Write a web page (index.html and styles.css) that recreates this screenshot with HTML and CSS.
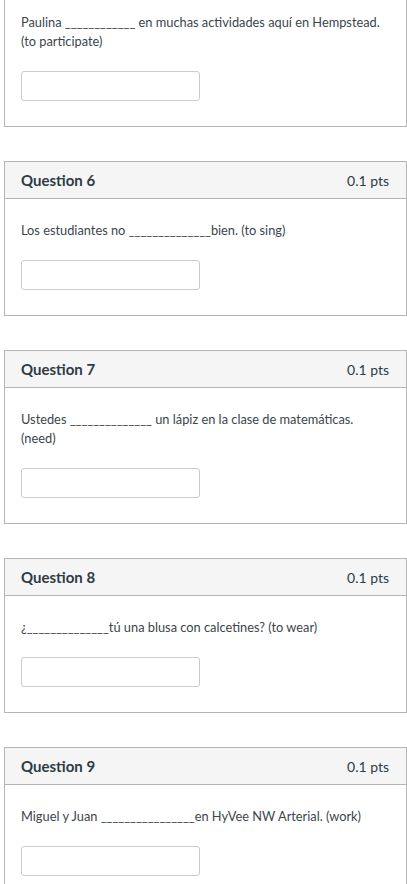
FILE: index.html
```html
<!DOCTYPE html>
<html lang="es">
<head>
<meta charset="utf-8">
<link rel="stylesheet" href="styles.css">
</head>
<body>
<div class="page">
  <div class="card card-partial">
    <div class="card-body">
      <div class="q-text">Paulina ____________ en muchas actividades aquí en Hempstead. (to participate)</div>
      <input class="answer" type="text">
    </div>
  </div>

  <div class="card">
    <div class="card-header"><span class="q-title">Question 6</span><span class="q-pts">0.1 pts</span></div>
    <div class="card-body">
      <div class="q-text">Los estudiantes no ______________bien. (to sing)</div>
      <input class="answer" type="text">
    </div>
  </div>

  <div class="card">
    <div class="card-header"><span class="q-title">Question 7</span><span class="q-pts">0.1 pts</span></div>
    <div class="card-body">
      <div class="q-text">Ustedes ______________ un lápiz en la clase de matemáticas. (need)</div>
      <input class="answer" type="text">
    </div>
  </div>

  <div class="card">
    <div class="card-header"><span class="q-title">Question 8</span><span class="q-pts">0.1 pts</span></div>
    <div class="card-body">
      <div class="q-text">¿______________tú una blusa con calcetines? (to wear)</div>
      <input class="answer" type="text">
    </div>
  </div>

  <div class="card">
    <div class="card-header"><span class="q-title">Question 9</span><span class="q-pts">0.1 pts</span></div>
    <div class="card-body">
      <div class="q-text">Miguel y Juan ________________en HyVee NW Arterial. (work)</div>
      <input class="answer" type="text">
    </div>
  </div>
</div>
</body>
</html>
```

FILE: styles.css
```css
html, body {
  margin: 0;
  padding: 0;
  background: #ffffff;
}

body {
  font-family: Lato, "Open Sans", "Liberation Sans", sans-serif;
  color: #2d3b45;
  overflow: hidden;
}

.page {
  padding-left: 4px;
  display: flex;
  flex-direction: column;
  gap: 34px;
}

.card {
  border: 1px solid #b5b5b5;
  background: #fff;
}

.card-partial {
  border-top: none;
}

.card-partial .card-body {
  padding-top: 13px;
}

.card-header {
  height: 36px;
  background: #f5f5f5;
  border-bottom: 1px solid #b5b5b5;
  display: flex;
  align-items: center;
  justify-content: space-between;
  padding: 0 17px 0 16px;
}

.q-title {
  font-weight: 700;
  font-size: 15px;
  color: #2d3b45;
}

.q-pts {
  font-size: 14px;
  color: #2d3b45;
}

.card-body {
  padding: 22px 16px 25px 16px;
}

.q-text {
  font-size: 12.8px;
  line-height: 19px;
  color: #3b454d;
}

.answer {
  display: block;
  box-sizing: border-box;
  margin: 20px 0 0 0;
  width: 179px;
  height: 30px;
  border: 1px solid #c7cdd1;
  border-radius: 3px;
  background: #fff;
  padding: 0 8px;
  font-family: inherit;
}
```
